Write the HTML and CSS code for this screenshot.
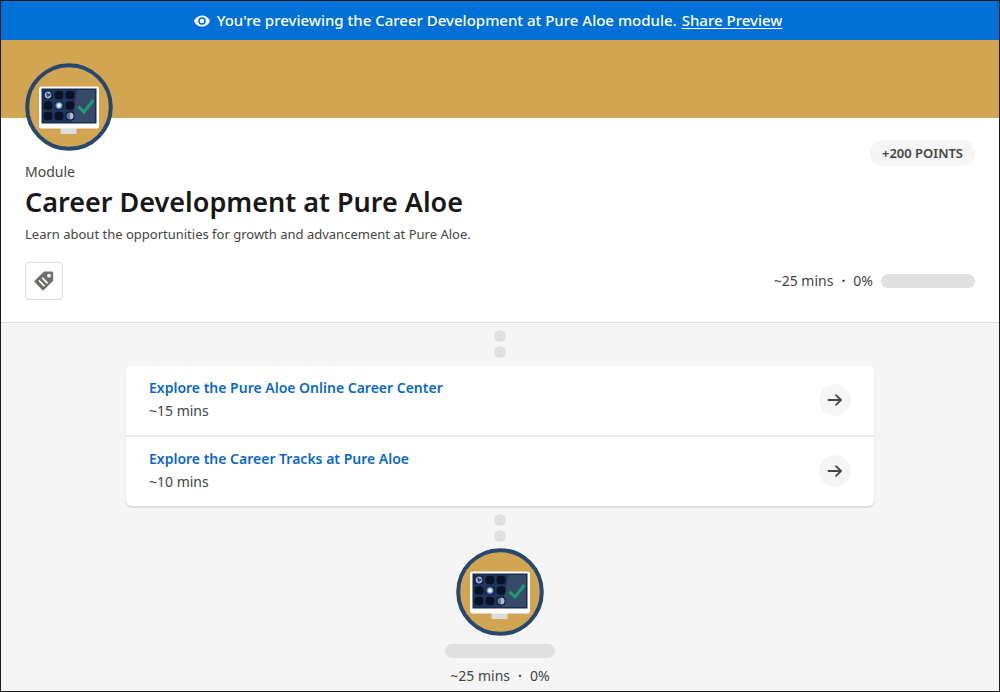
FILE: index.html
```html
<!DOCTYPE html>
<html lang="en">
<head>
<meta charset="utf-8">
<meta name="viewport" content="width=device-width, initial-scale=1">
<title>Career Development at Pure Aloe</title>
<link rel="stylesheet" href="styles.css">
</head>
<body>
<svg class="symbols" aria-hidden="true">
  <defs>
    <linearGradient id="moon"><stop offset="0.5" stop-color="#63769f"/><stop offset="0.5" stop-color="#aebbd8"/></linearGradient>
    <radialGradient id="glow"><stop offset="0.3" stop-color="#fff"/><stop offset="0.6" stop-color="#7fa4e0"/><stop offset="1" stop-color="#1d3f7c"/></radialGradient>
    <symbol id="badge" viewBox="0 0 88 88">
      <circle cx="44" cy="44" r="41.8" fill="#d2a553" stroke="#26486f" stroke-width="4"/>
      <rect x="35.500" y="64" width="16" height="7" fill="#dedddb"/>
      <rect x="14" y="23.500" width="60" height="42" rx="2.500" fill="#fff"/>
      <rect x="16.500" y="25.500" width="55" height="35" fill="#182a50"/>
      <path d="M52 27h18v32H46z" fill="#364b69"/>
      <path d="M18 27h34l-6 32H18z" fill="#20365d"/>
      <g fill="#0a1326">
        <rect x="18.500" y="27.700" width="9" height="8.600" rx="3.500"/><rect x="29.500" y="27.700" width="9" height="8.600" rx="3.500"/><rect x="40.500" y="27.700" width="9" height="8.600" rx="3.500"/>
        <rect x="18.500" y="38.200" width="9" height="8.600" rx="3.500"/><rect x="29.500" y="38.200" width="9" height="8.600" rx="3.500"/><rect x="40.500" y="38.200" width="9" height="8.600" rx="3.500"/>
        <rect x="18.500" y="48.700" width="9" height="8.600" rx="3.500"/><rect x="29.500" y="48.700" width="9" height="8.600" rx="3.500"/><rect x="40.500" y="48.700" width="9" height="8.600" rx="3.500"/>
      </g>
      <circle cx="23" cy="32" r="3.400" fill="#a9bbdf"/>
      <path d="M21 29l3 2 2-1-1 3-3 1z" fill="#2d4677"/>
      <circle cx="34" cy="42.500" r="4" fill="url(#glow)"/>
      <circle cx="45" cy="53" r="3.600" fill="url(#moon)"/>
      <path d="M53.500 43.500l5.500 5.500 9.500-12" fill="none" stroke="#1f9d6c" stroke-width="3"/>
    </symbol>
    <symbol id="arrow" viewBox="0 0 16 16">
      <path d="M1.500 8h12.500M9 3.200L14 8l-5 4.800" fill="none" stroke="currentColor" stroke-width="1.800" stroke-linecap="round" stroke-linejoin="round"/>
    </symbol>
  </defs>
</svg>
<div class="page">
  <div class="preview">
    <svg class="eye" viewBox="0 0 16 12" aria-hidden="true">
      <path fill="#fff" fill-rule="evenodd" d="M8 .5C4.500.5 1.500 2.700.2 5.600a1 1 0 0 0 0 .8C1.500 9.300 4.500 11.500 8 11.500s6.500-2.200 7.800-5.100a1 1 0 0 0 0-.8C14.500 2.700 11.500.5 8 .5zM8 9.800a3.800 3.800 0 1 1 0-7.600 3.800 3.800 0 0 1 0 7.600z"/>
      <circle cx="8" cy="6" r="2.200" fill="#fff"/>
    </svg>
    <p class="preview-text">You're previewing the Career Development at Pure Aloe module.</p>
    <a class="preview-link" href="#">Share Preview</a>
  </div>
  <header class="module">
    <div class="cover"></div>
    <div class="intro">
      <div class="summary">
        <svg class="badge" role="img" aria-label="Module badge"><use href="#badge"/></svg>
        <p class="kind">Module</p>
        <h1 class="title">Career Development at Pure Aloe</h1>
        <p class="lead">Learn about the opportunities for growth and advancement at Pure Aloe.</p>
      </div>
      <span class="points">+200 POINTS</span>
    </div>
    <div class="actions">
      <button class="tag" type="button" aria-label="Tags">
        <svg class="tag-icon" viewBox="0 0 20 20" aria-hidden="true">
          <path fill="#706e6b" fill-rule="evenodd" d="M9.700.9L1 9.300a1.500 1.500 0 0 0 0 2.200l7 7.200a1.500 1.500 0 0 0 2.200 0l8.500-8.500c.3-.3.500-.7.500-1.200V2.200C19.200 1.300 18.500.6 17.600.6h-7c-.3 0-.7.100-.9.300zM15 2.800a1.900 1.900 0 1 1 0 3.800 1.900 1.900 0 0 1 0-3.800z"/>
          <path d="M5.400 10l4.600 4.700M8.600 7.200l4.500 4.600" stroke="#fff" stroke-width="1.700" stroke-linecap="round"/>
        </svg>
      </button>
      <div class="status">
        <span>~25 mins</span><b>·</b><span>0%</span>
        <progress class="bar" max="100" value="0" aria-label="Module progress"></progress>
      </div>
    </div>
  </header>
  <main class="path">
    <div class="dots"><i class="dot"></i><i class="dot"></i></div>
    <ul class="units">
      <li class="unit">
        <div class="unit-body">
          <a class="unit-link" href="#">Explore the Pure Aloe Online Career Center</a>
          <p class="unit-time">~15 mins</p>
        </div>
        <button class="go" type="button" aria-label="Open Explore the Pure Aloe Online Career Center"><svg class="arrow"><use href="#arrow"/></svg></button>
      </li>
      <li class="unit">
        <div class="unit-body">
          <a class="unit-link" href="#">Explore the Career Tracks at Pure Aloe</a>
          <p class="unit-time">~10 mins</p>
        </div>
        <button class="go" type="button" aria-label="Open Explore the Career Tracks at Pure Aloe"><svg class="arrow"><use href="#arrow"/></svg></button>
      </li>
    </ul>
    <div class="dots"><i class="dot"></i><i class="dot"></i></div>
    <div class="finish">
      <svg class="badge" role="img" aria-label="Module badge"><use href="#badge"/></svg>
      <progress class="bar bar-wide" max="100" value="0" aria-label="Badge progress"></progress>
      <div class="status"><span>~25 mins</span><b>·</b><span>0%</span></div>
    </div>
  </main>
</div>
</body>
</html>
```
FILE: styles.css
```css
* { box-sizing: border-box; }
body {
  margin: 0;
  font-family: "Noto Sans", "Open Sans", sans-serif;
  font-size: 14px;
  line-height: 20px;
  color: #444;
}
p, h1, ul { margin: 0; padding: 0; }
.symbols { position: absolute; width: 0; height: 0; }
.page {
  display: flex;
  flex-direction: column;
  min-height: 100vh;
  border: 1px solid #1c1c1e;
  background: #f5f5f5;
}
.preview {
  display: flex;
  align-items: center;
  justify-content: center;
  min-height: 39px;
  padding: 0 48px 0 24px;
  background: #0070d7;
  color: #fff;
  font-size: 15px;
  font-weight: 500;
}
.preview-text { margin: 0 5px 2px 7px; }
.eye { width: 16px; height: 12px; }
.preview-link { margin-bottom: 2px; color: #fff; text-underline-offset: 2px; }
.module { background: #fff; border-bottom: 1px solid #dcdcdc; }
.cover { height: 78px; background: #d2a553; }
.intro {
  display: flex;
  justify-content: space-between;
  align-items: flex-start;
  padding: 0 24px;
}
.summary { display: flex; flex-direction: column; margin-top: -55px; }
.badge { width: 88px; height: 88px; }
.kind { margin-top: 11px; }
.title {
  margin: 4px 0 6px;
  font-size: 27px;
  font-weight: 600;
  line-height: 32px;
  color: #181818;
}
.lead { font-size: 13px; }
.points {
  margin-top: 22px;
  padding: 3px 12px;
  border-radius: 13px;
  background: #f5f5f5;
  font-size: 13px;
  font-weight: 600;
}
.actions {
  display: flex;
  align-items: center;
  justify-content: space-between;
  padding: 18px 24px 22px;
}
.tag {
  display: grid;
  place-items: center;
  width: 38px;
  height: 38px;
  padding: 0;
  border: 1px solid #ddd;
  border-radius: 4px;
  background: #fff;
}
.tag-icon { width: 20px; height: 20px; }
.status { display: flex; align-items: center; gap: 8px; }
.bar {
  appearance: none;
  width: 94px;
  height: 14px;
  border: 0;
  border-radius: 7px;
  background: #e0e0e0;
  overflow: hidden;
}
.bar::-webkit-progress-bar { background: #e0e0e0; }
.bar-wide { width: 110px; }
.path {
  display: flex;
  flex-direction: column;
  align-items: center;
  padding: 7px 24px 4px;
}
.dots { display: grid; gap: 4px; }
.dot { width: 12px; height: 12px; border-radius: 50%; background: #e0e0e0; }
.units {
  width: 100%;
  max-width: 748px;
  margin: 8px 0;
  border-radius: 6px;
  background: #fff;
  box-shadow: 0 2px 2px #dadada;
  list-style: none;
}
.unit {
  display: flex;
  align-items: center;
  justify-content: space-between;
  padding: 12px 23px 14px;
}
.unit + .unit { border-top: 2px solid #eaeaea; }
.unit-link {
  font-weight: 600;
  color: #0b68c8;
  text-decoration: none;
}
.unit-time { margin-top: 3px; }
.go {
  display: grid;
  place-items: center;
  width: 32px;
  height: 32px;
  padding: 0;
  border: 0;
  border-radius: 50%;
  background: #f5f5f5;
  color: #444;
}
.arrow { width: 16px; height: 16px; }
.finish {
  display: flex;
  flex-direction: column;
  align-items: center;
  gap: 8px;
  margin-top: 6px;
}
```
